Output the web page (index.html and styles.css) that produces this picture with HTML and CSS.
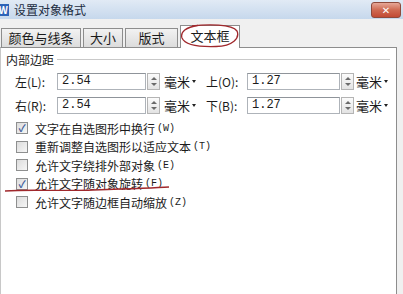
FILE: index.html
```html
<!DOCTYPE html>
<html>
<head>
    <title>设置对象格式</title>
    <meta charset="utf-8">
    <link rel="stylesheet" href="styles.css">
</head>
<body>
    <div class="window">
        <div class="titlebar">
            <span class="app-icon">W</span>
            <span class="title">设置对象格式</span>
            <span class="close">✕</span>
        </div>

        <div class="tabbar">
            <div class="tab tab-color">颜色与线条</div>
            <div class="tab tab-size">大小</div>
            <div class="tab tab-layout">版式</div>
            <div class="tab tab-text active">文本框</div>
        </div>

        <div class="panel">
            <div class="group-title"><span>内部边距</span><i class="rule"></i></div>

            <div class="margin-row">
                <div class="field">
                    <label>左(L):</label>
                    <div class="input">2.54</div>
                    <div class="spin"><b class="up"></b><b class="down"></b></div>
                    <span class="unit">毫米<i class="caret"></i></span>
                </div>
                <div class="field">
                    <label>上(O):</label>
                    <div class="input">1.27</div>
                    <div class="spin"><b class="up"></b><b class="down"></b></div>
                    <span class="unit">毫米<i class="caret"></i></span>
                </div>
            </div>
            <div class="margin-row">
                <div class="field">
                    <label>右(R):</label>
                    <div class="input">2.54</div>
                    <div class="spin"><b class="up"></b><b class="down"></b></div>
                    <span class="unit">毫米<i class="caret"></i></span>
                </div>
                <div class="field">
                    <label>下(B):</label>
                    <div class="input">1.27</div>
                    <div class="spin"><b class="up"></b><b class="down"></b></div>
                    <span class="unit">毫米<i class="caret"></i></span>
                </div>
            </div>

            <div class="checks">
                <div class="check"><span class="box checked">✓</span>文字在自选图形中换行<span class="key">(W)</span></div>
                <div class="check"><span class="box"></span>重新调整自选图形以适应文本<span class="key">(T)</span></div>
                <div class="check"><span class="box"></span>允许文字绕排外部对象<span class="key">(E)</span></div>
                <div class="check"><span class="box checked">✓</span>允许文字随对象旋转<span class="key">(F)</span></div>
                <div class="check"><span class="box"></span>允许文字随边框自动缩放<span class="key">(Z)</span></div>
            </div>
        </div>

        <!-- hand-drawn annotations -->
        <svg class="mark-ellipse" width="60" height="24" viewBox="0 0 60 24">
            <path d="M12 2 C 28 0, 52 0, 57 7 C 60 14, 53 22, 36 22.5 C 20 23, 5 21, 2 14 C 0 8, 6 3, 18 1.5" fill="none" stroke="#a0282c" stroke-width="1.3"/>
        </svg>
        <svg class="mark-line" width="170" height="10" viewBox="0 0 170 10">
            <path d="M2 6 C 30 4, 60 6.5, 90 5 C 120 4, 150 3, 166 2" fill="none" stroke="#a0282c" stroke-width="1.3"/>
        </svg>
    </div>
</body>
</html>
```

FILE: styles.css
```css
body {
    margin: 0;
    font-family: "Noto Sans CJK SC", "DejaVu Sans", sans-serif;
    font-size: 12px;
    color: #1b1b1b;
}
.window {
    position: relative;
    width: 403px;
    height: 294px;
    overflow: hidden;
    background: #f0f0f0;
}
.titlebar {
    height: 19px;
    display: flex;
    align-items: center;
    background: linear-gradient(180deg, #e1eaf5 0%, #c6d8ec 100%);
}
.app-icon {
    width: 16px;
    height: 12px;
    margin-left: -8px;
    background: #2d63b8;
    color: white;
    font-size: 10px;
    font-weight: bold;
    line-height: 12px;
    text-align: right;
    padding-right: 1px;
}
.title {
    margin-left: 5px;
    font-size: 12px;
    color: #1c2c40;
}
.close {
    margin-left: auto;
    margin-right: 2px;
    width: 28px;
    height: 14px;
    border: 1px solid #8e4a3c;
    border-radius: 3px;
    background: linear-gradient(180deg, #e6a797 0%, #cf6a52 50%, #c24a34 100%);
    color: white;
    font-size: 10px;
    font-weight: bold;
    line-height: 14px;
    text-align: center;
}
.tabbar {
    height: 28px;
    display: flex;
    align-items: flex-end;
    padding-left: 1px;
}
.tab {
    height: 18px;
    margin-right: 2px;
    border: 1px solid #8d8d8d;
    border-bottom: none;
    background: linear-gradient(180deg, #f2f2f2 0%, #dcdcdc 100%);
    font-size: 13px;
    line-height: 18px;
    text-align: center;
}
.tab-color { width: 78px; }
.tab-size { width: 38px; }
.tab-layout { width: 51px; }
.tab-text { width: 58px; }
.tab.active {
    height: 22px;
    line-height: 20px;
    background: white;
    margin-bottom: -1px;
    position: relative;
}
.panel {
    height: 260px;
    margin-right: 6px;
    background: white;
    border: 1px solid #8d8d8d;
    border-left-color: #c8c8c8;
}
.group-title {
    display: flex;
    align-items: center;
    padding: 3px 6px 0 5px;
    height: 16px;
    font-size: 12px;
}
.rule {
    flex: 1;
    margin-left: 3px;
    border-top: 1px solid #c9c9c9;
}
.margin-row {
    display: flex;
    margin-top: 6px;
}
.margin-row + .margin-row { margin-top: 7px; }
.field {
    display: flex;
    align-items: center;
    height: 17px;
}
.field label {
    width: 42px;
    padding-left: 14px;
    font-size: 12px;
}
.field + .field label {
    width: 41px;
    padding-left: 4px;
}
.input {
    width: 83px;
    height: 15px;
    border: 1px solid #aeb3b9;
    border-top-color: #8f949a;
    padding-left: 4px;
    font-family: "Liberation Mono", monospace;
    font-size: 12px;
    line-height: 15px;
}
.field + .field .input { width: 87px; }
.spin {
    width: 13px;
    height: 17px;
    margin-left: 1px;
    border: 1px solid #b4b4b4;
    background: linear-gradient(180deg, #fbfbfb 0%, #e3e3e3 100%);
    display: flex;
    flex-direction: column;
    align-items: center;
    justify-content: space-around;
    padding: 2px 0;
    box-sizing: border-box;
}
.spin b {
    width: 0;
    height: 0;
    border-left: 3px solid transparent;
    border-right: 3px solid transparent;
}
.spin .up { border-bottom: 3px solid #6a6a6a; }
.spin .down { border-top: 3px solid #6a6a6a; }
.unit {
    margin-left: 4px;
    width: 38px;
    font-size: 13px;
    display: flex;
    align-items: center;
}
.field + .field .unit { margin-left: 2px; }
.caret {
    margin-left: 2px;
    width: 0;
    height: 0;
    border-left: 2px solid transparent;
    border-right: 2px solid transparent;
    border-top: 3px solid #222;
}
.checks {
    margin-top: 5px;
    padding-left: 15px;
}
.check {
    display: flex;
    align-items: center;
    height: 18.5px;
    font-size: 12px;
}
.box {
    width: 10px;
    height: 10px;
    margin-right: 7px;
    border: 1px solid #8e8f8f;
    background: linear-gradient(135deg, #dcdcdc 0%, #f6f6f6 100%);
    color: #3a5a9a;
    font-size: 10px;
    line-height: 10px;
    text-align: center;
    font-weight: bold;
}
.key {
    font-family: "Liberation Mono", monospace;
    font-size: 10px;
    margin-left: 2px;
}
.mark-ellipse {
    position: absolute;
    left: 180px;
    top: 24px;
}
.mark-line {
    position: absolute;
    left: 3px;
    top: 185px;
}
```
